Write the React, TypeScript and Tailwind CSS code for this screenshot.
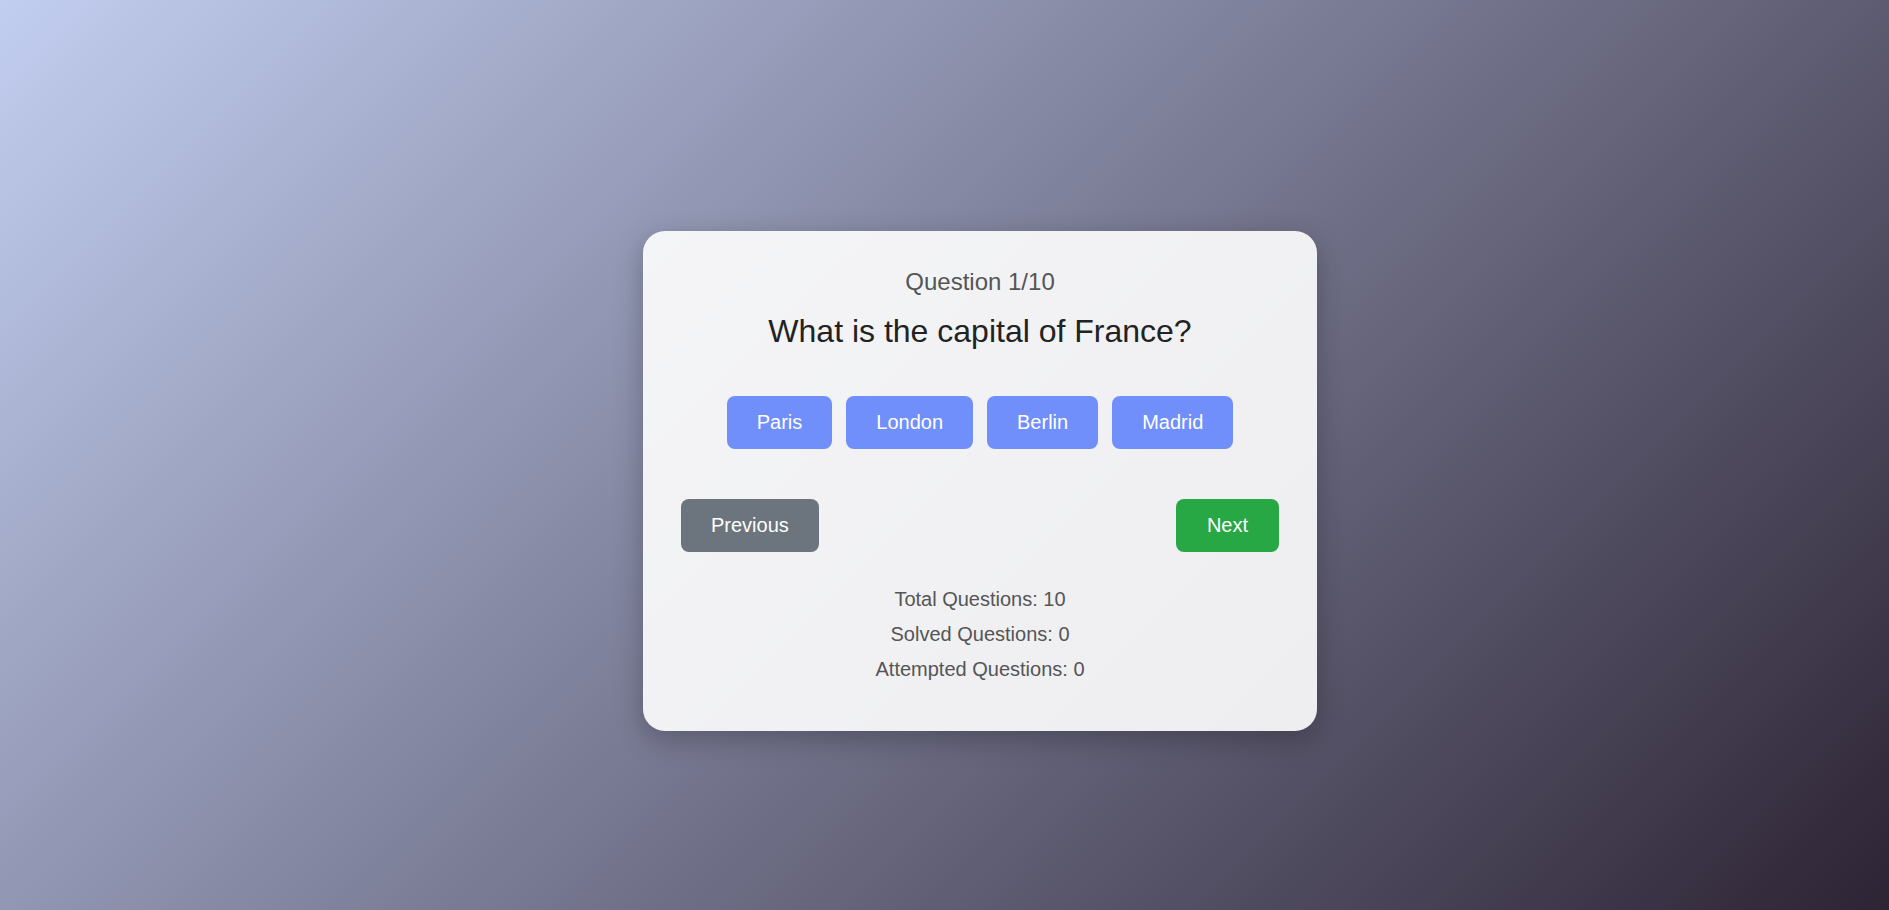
import { useState } from "react";

const questions = [
  { q: "What is the capital of France?", options: ["Paris", "London", "Berlin", "Madrid"], answer: "Paris" },
];

export default function App() {
  const [index, setIndex] = useState(0);
  const [solved, setSolved] = useState(0);
  const [attempted, setAttempted] = useState(0);
  const current = questions[index % questions.length];

  const pick = (opt: string) => {
    setAttempted(attempted + 1);
    if (opt === current.answer) setSolved(solved + 1);
  };

  return (
    <div className="min-h-screen w-full flex items-center justify-center pl-[71px] pt-[52px] bg-[linear-gradient(135deg,#c2cef0_0%,#2d2434_100%)] font-['Liberation_Sans',Arial,sans-serif]">
      <div className="w-[674px] bg-white/90 rounded-[22px] shadow-[0_8px_28px_rgba(0,0,0,0.25)] px-[38px] pt-[37px] pb-[50px] text-center">
        <p className="text-[24px] leading-[27.6px] text-[#555]">Question {index + 1}/10</p>
        <h2 className="mt-[18px] text-[32px] leading-[36.8px] text-[#222]">{current.q}</h2>

        <div className="mt-[46px] flex justify-center gap-[14px]">
          {current.options.map((opt) => (
            <button
              key={opt}
              onClick={() => pick(opt)}
              className="bg-[#708ffa] text-white text-[20px] leading-[23px] px-[30px] py-[15px] rounded-[8px] cursor-pointer"
            >
              {opt}
            </button>
          ))}
        </div>

        <div className="mt-[50px] flex justify-between">
          <button
            onClick={() => setIndex(Math.max(0, index - 1))}
            className="bg-[#6c757d] text-white text-[20px] leading-[23px] px-[30px] py-[15px] rounded-[8px] cursor-pointer"
          >
            Previous
          </button>
          <button
            onClick={() => setIndex(index + 1)}
            className="bg-[#28a745] text-white text-[20px] leading-[23px] px-[31px] py-[15px] rounded-[8px] cursor-pointer"
          >
            Next
          </button>
        </div>

        <div className="mt-[36px] flex flex-col gap-[12px] text-[20px] leading-[23px] text-[#555]">
          <p>Total Questions: 10</p>
          <p>Solved Questions: {solved}</p>
          <p>Attempted Questions: {attempted}</p>
        </div>
      </div>
    </div>
  );
}
